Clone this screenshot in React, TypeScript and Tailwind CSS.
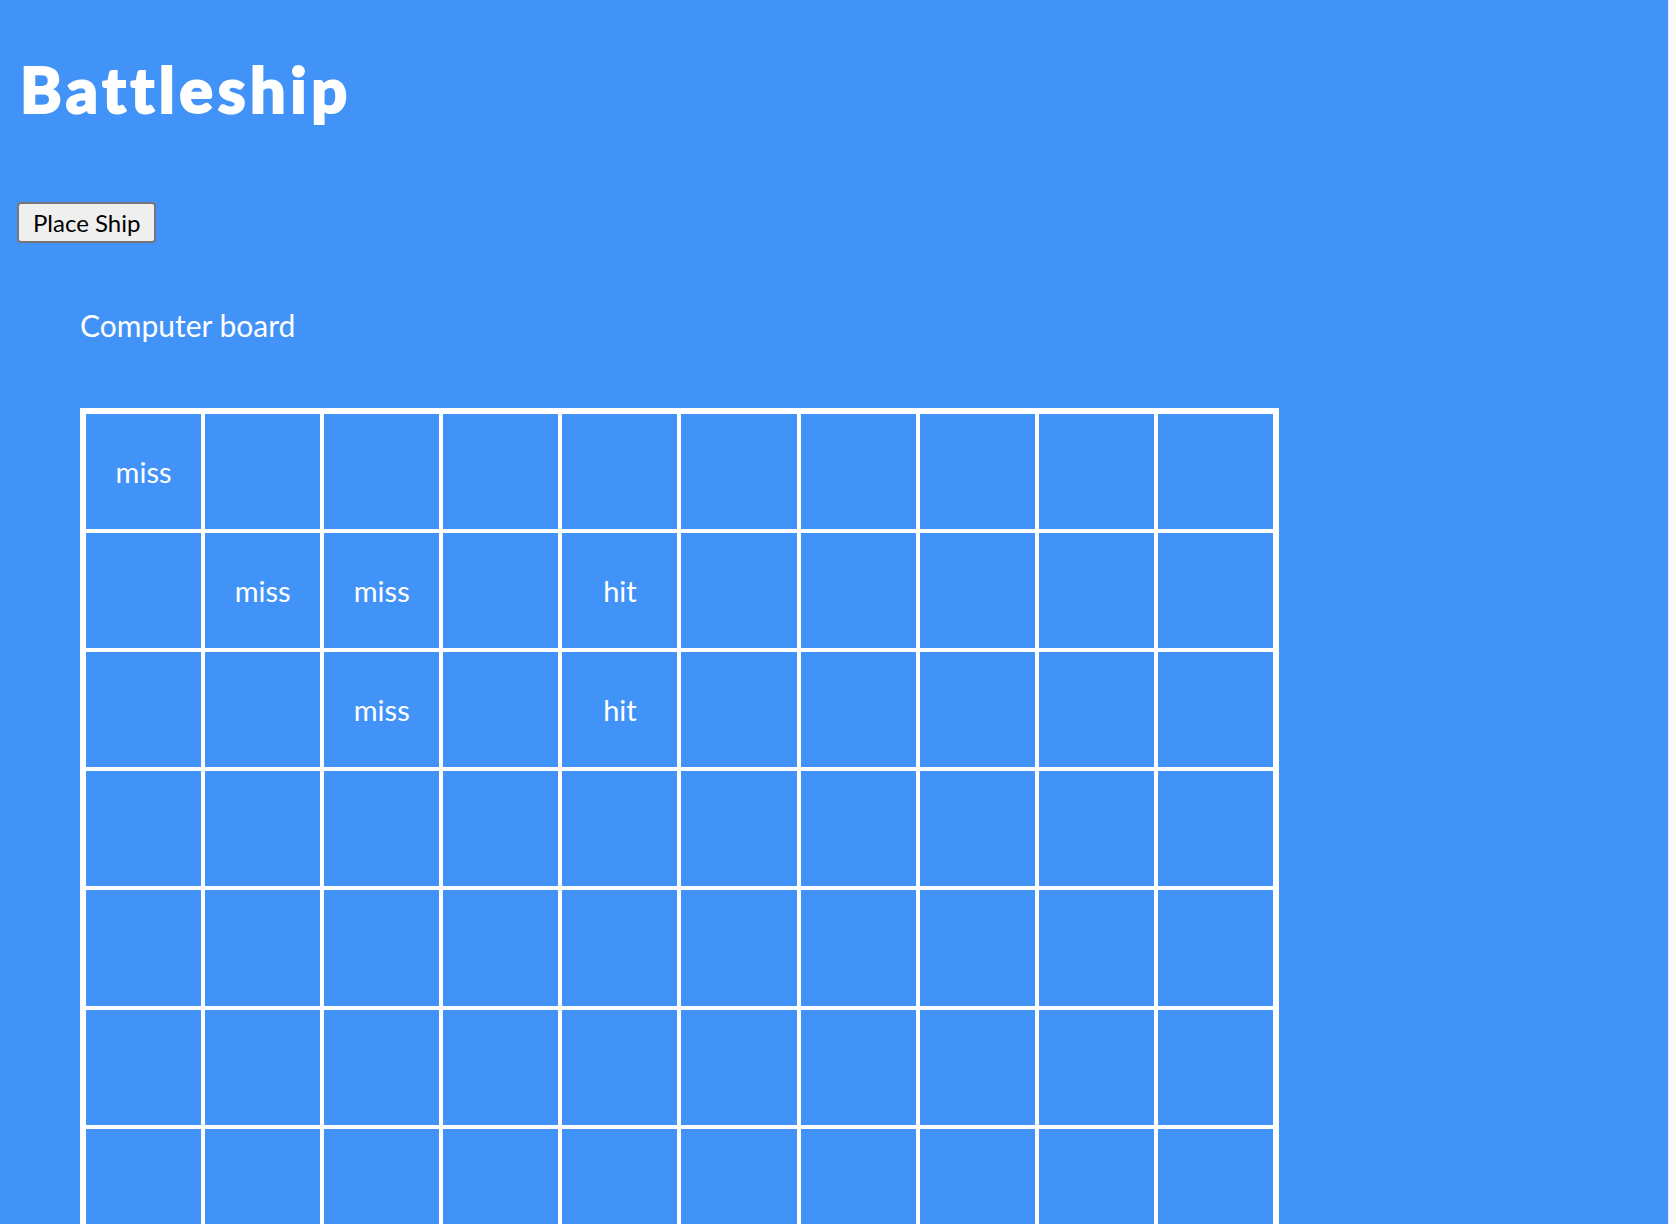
const hits: Record<string, string> = {
  '0-0': 'miss',
  '1-1': 'miss',
  '1-2': 'miss',
  '1-4': 'hit',
  '2-2': 'miss',
  '2-4': 'hit',
};

const Board = () => {
  const rows = Array.from({ length: 10 }, (_, r) => r);
  const cols = Array.from({ length: 10 }, (_, c) => c);

  return (
    <div className="grid grid-cols-10 gap-[4px] bg-white p-[6px] w-[1199px]">
      {rows.map((r) =>
        cols.map((c) => (
          <div
            key={`${r}-${c}`}
            className="aspect-square bg-[#4293f7] flex items-center justify-center text-white text-[29px]"
          >
            {hits[`${r}-${c}`] ?? ''}
          </div>
        ))
      )}
    </div>
  );
};

export default function App() {
  return (
    <div className="flex h-screen overflow-hidden font-['Lato',sans-serif]">
      <div className="flex-1 bg-[#4293f7] px-[17px] pt-[53px]">
        <h1 className="text-white font-black text-[63px] leading-[72px] ml-[3px] tracking-[0.072em] [font-variant-ligatures:none] [-webkit-text-stroke:2px_white]">
          Battleship
        </h1>

        <button className="mt-[77px] h-[41px] px-[14px] bg-[#efefef] border-2 border-[#767676] rounded-[4px] text-black text-[24px] leading-none">
          Place Ship
        </button>

        <div className="ml-[63px] mt-[64px]">
          <h2 className="text-white text-[30px] leading-[36px]">Computer board</h2>
          <div className="mt-[65px]">
            <Board />
          </div>
        </div>
      </div>
      <div className="w-[8px] bg-[#f9f9f9] border-l border-[#ececec]" />
    </div>
  );
}
